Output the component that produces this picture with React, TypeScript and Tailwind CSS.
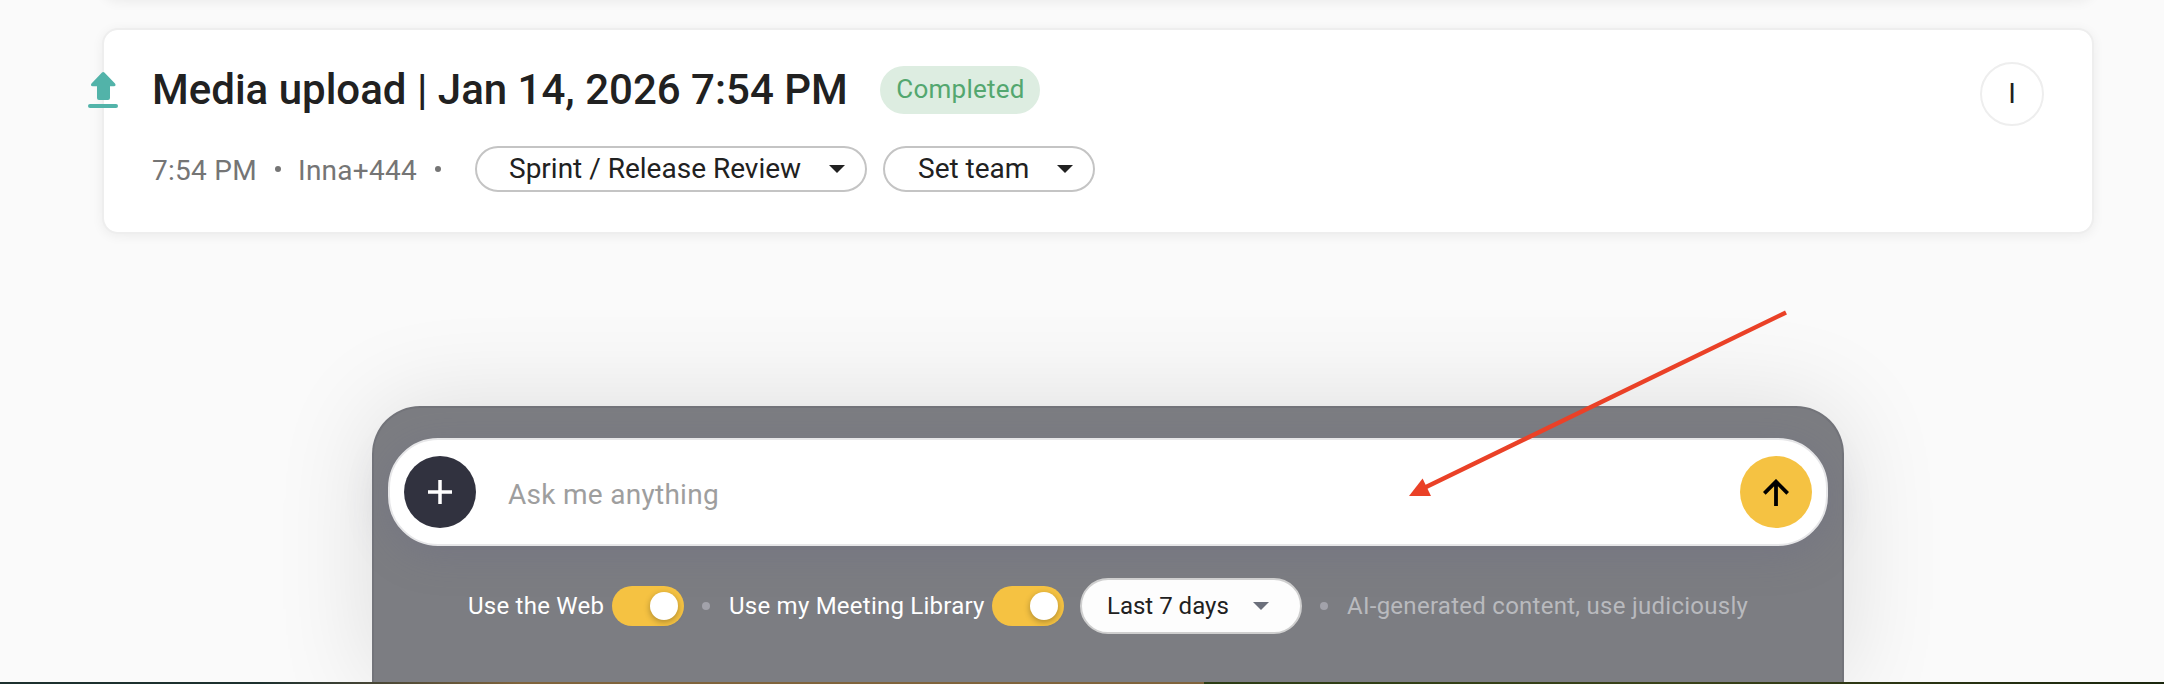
import { ReactNode } from "react";

const cardClass = "mr-[70px] ml-[102px] rounded-2xl border-2 border-[#eeeeee] bg-white bg-clip-padding shadow-[0_2px_12px_rgba(0,0,0,0.06)]";

function Caret({ className }: { className?: string }) {
  return (
    <svg viewBox="0 0 16 8" className={`h-2 w-4 shrink-0 ${className || ""}`} fill="currentColor">
      <path d="M0 0h16L8 8z" />
    </svg>
  );
}

function UploadIcon() {
  return (
    <svg viewBox="0 0 30 36" className="h-9 w-[30px] shrink-0 text-[#52b3a9]" fill="currentColor">
      <path d="M14 .5q1.200-1 2.400 0L27 11.400q1.500 2.600-.8 2.900H22V26q0 2-2 2h-9q-2 0-2-2V14.300H4.800Q2 14 3.500 11.400z" />
      <rect y="32" width="30" height="4" rx="2" />
    </svg>
  );
}

function SelectPill({ children, className }: { children: ReactNode; className: string }) {
  return (
    <button className={`flex h-[46px] shrink-0 items-center justify-between rounded-full border-2 border-[#c4c4c4] pr-5 text-[28px] leading-none text-[#212121] ${className}`}>
      <span className="whitespace-nowrap">{children}</span>
      <Caret />
    </button>
  );
}

function Toggle() {
  return (
    <span role="switch" aria-checked="true" className="flex h-10 w-[72px] shrink-0 items-center justify-end rounded-full bg-[#f5c242] pr-1.5">
      <span className="h-7 w-7 rounded-full bg-white shadow-[0_2px_6px_rgba(0,0,0,0.3)]" />
    </span>
  );
}

function MeetingCard() {
  return (
    <div className={`${cardClass} flex h-[206px] shrink-0`}>
      <div className="-ml-4 mt-[42px]">
        <UploadIcon />
      </div>
      <div className="ml-[34px] flex-1">
        <div className="mt-9 flex h-12 items-center">
          <h2 className="w-[728px] whitespace-nowrap text-[42px] leading-none font-medium text-[#212121]">Media upload | Jan 14, 2026 7:54 PM</h2>
          <span className="flex h-12 w-40 items-center justify-center rounded-full bg-[#ddede1] pb-0.5 pl-px text-[26px] leading-none tracking-[0.25px] text-[#53a76f]">Completed</span>
        </div>
        <div className="mt-8 flex h-[46px] items-center text-[28px] leading-none text-[#757575]">
          <span className="w-[123px] pt-1 tracking-[0.26px] whitespace-nowrap">7:54 PM</span>
          <span className="h-1.5 w-1.5 rounded-full bg-[#757575]" />
          <span className="ml-[17px] w-[137px] pt-1 tracking-[0.26px] whitespace-nowrap">Inna+444</span>
          <span className="h-1.5 w-1.5 rounded-full bg-[#757575]" />
          <SelectPill className="ml-[34px] w-[392px] pl-8">Sprint / Release Review</SelectPill>
          <SelectPill className="ml-4 w-[212px] pl-[33px]">Set team</SelectPill>
        </div>
      </div>
      <div className="mt-8 mr-12 flex h-16 w-16 items-center justify-center rounded-full border-2 border-[#eeeeee] text-[28px] leading-none text-[#212121]">I</div>
    </div>
  );
}

function AskPanel() {
  return (
    <div className="mt-[172px] ml-[372px] h-[276px] w-[1472px] shrink-0 rounded-t-[48px] border-2 border-b-0 border-[#73747a] bg-[#7c7d82] px-3.5 pt-[30px] shadow-[0_0_100px_rgba(0,0,0,0.12)]">
      <div className="flex h-[108px] items-center rounded-[50px] border-2 border-[#e6e6e8] bg-white px-3.5 shadow-[0_8px_40px_rgba(100,100,130,0.25)]">
        <button aria-label="Add" className="flex h-[72px] w-[72px] shrink-0 items-center justify-center rounded-full bg-[#31323f]">
          <svg viewBox="0 0 24 24" className="h-6 w-6" stroke="#fff" strokeWidth="3.5">
            <path d="M12 0v24M0 12h24" />
          </svg>
        </button>
        <span className="ml-8 flex-1 pt-1.5 text-[28px] leading-none tracking-[0.28px] text-[#9e9e9e]">Ask me anything</span>
        <button aria-label="Send" className="flex h-[72px] w-[72px] shrink-0 items-center justify-center rounded-full bg-[#f5c242]">
          <svg viewBox="0 0 26 27" className="h-[27px] w-[26px]" stroke="#000" strokeWidth="3.800" fill="none">
            <path d="M13 27V2M1.300 14.300L13 2.600l11.700 11.700" />
          </svg>
        </button>
      </div>
      <div className="mt-8 ml-20 flex h-14 items-center text-2xl leading-none tracking-[0.24px] text-white">
        <span className="w-36 whitespace-nowrap">Use the Web</span>
        <Toggle />
        <span className="ml-[18px] h-2 w-2 rounded-full bg-[#a2a2aa]" />
        <span className="ml-[19px] w-[263px] whitespace-nowrap">Use my Meeting Library</span>
        <Toggle />
        <button className="ml-4 flex h-14 w-[222px] shrink-0 items-center justify-between rounded-full border-2 border-[#cfcfcf] bg-[#fdfdfd] pr-[31px] pl-[25px] tracking-normal text-[#212121]">
          Last 7 days
          <Caret className="text-[#6b6f7b]" />
        </button>
        <span className="ml-[18px] h-2 w-2 rounded-full bg-[#a2a2aa]" />
        <span className="ml-[19px] whitespace-nowrap tracking-[0.27px] text-[#b9babe]">AI-generated content, use judiciously</span>
      </div>
    </div>
  );
}

export default function App() {
  return (
    <div className="relative flex h-[684px] w-[2164px] flex-col overflow-hidden bg-[#fafafa] font-[Roboto,sans-serif]">
      {/* tail of the previous card, only its shadow is in view */}
      <div className={`${cardClass} -mt-10 mb-7 h-10 shrink-0`} />
      <MeetingCard />
      <AskPanel />
      {/* top edge of the wallpaper below the window */}
      <div className="h-0.5 w-full shrink-0 bg-linear-to-r from-[#1c302e] from-12% via-[#80643c] via-24% to-[#80643c] to-55%">
        <div className="ml-[1204px] h-0.5 bg-linear-to-r from-[#2c3d14] via-[#3a4218] to-[#1a260d]" />
      </div>

      <svg viewBox="0 0 400 200" className="pointer-events-none absolute top-[304px] left-[1400px] h-[200px] w-[400px]" fill="#ea4127">
        <path d="M386 8.500L24 184" stroke="#ea4127" strokeWidth="4.400" />
        <path d="M9 192l13.600-17.500L31 192z" />
      </svg>
    </div>
  );
}
